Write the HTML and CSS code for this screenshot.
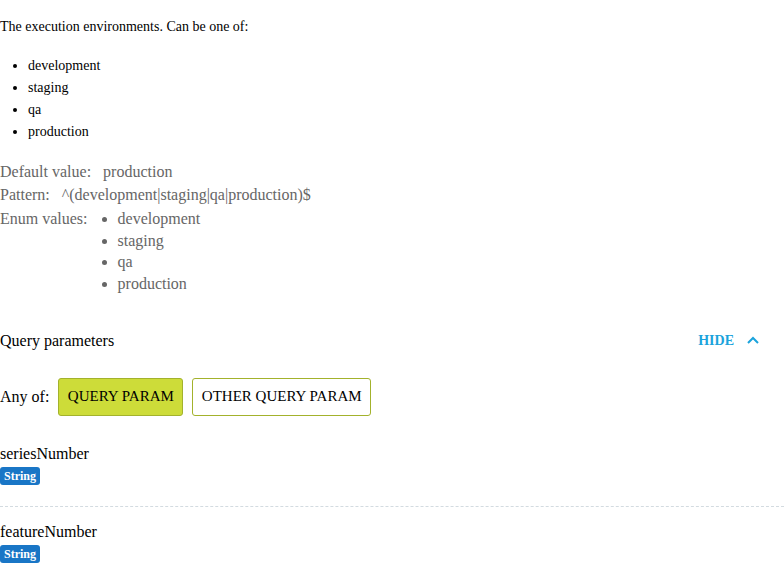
FILE: index.html
```html
<!DOCTYPE html>
<html>
<head>
<meta charset="utf-8">
<link rel="stylesheet" href="styles.css">
</head>
<body>
<div class="page">
  <section class="desc">
    <p class="desc-text">The execution environments. Can be one of:</p>
    <ul class="desc-list">
      <li>development</li>
      <li>staging</li>
      <li>qa</li>
      <li>production</li>
    </ul>
  </section>
  <section class="attrs">
    <div class="attr"><span class="attr-label">Default value:</span><span class="attr-value">production</span></div>
    <div class="attr"><span class="attr-label">Pattern:</span><span class="attr-value">^(development|staging|qa|production)$</span></div>
    <div class="attr enum"><span class="attr-label">Enum values:</span>
      <ul class="enum-list">
        <li>development</li>
        <li>staging</li>
        <li>qa</li>
        <li>production</li>
      </ul>
    </div>
  </section>
  <section class="query">
    <div class="query-head">
      <span class="query-title">Query parameters</span>
      <button class="hide-btn">HIDE <svg class="chev" width="12" height="8" viewBox="0 0 12 8"><path d="M1 7 L6 2 L11 7" fill="none" stroke="#1ba3dc" stroke-width="2"/></svg></button>
    </div>
    <div class="anyof">
      <span class="anyof-label">Any of:</span>
      <button class="opt active">QUERY PARAM</button>
      <button class="opt">OTHER QUERY PARAM</button>
    </div>
    <div class="param">
      <div class="param-name">seriesNumber</div>
      <span class="badge">String</span>
    </div>
    <div class="param last">
      <div class="param-name">featureNumber</div>
      <span class="badge">String</span>
    </div>
  </section>
</div>
</body>
</html>
```
FILE: styles.css
```css
html, body {
  margin: 0;
  padding: 0;
  background: #fff;
}
body {
  font-family: "Liberation Serif", "Times New Roman", serif;
  color: #000;
}
.page {
  padding-top: 19px;
}
.desc-text {
  margin: 0;
  font-size: 14px;
  line-height: 16px;
}
.desc-list {
  margin: 20px 0 0 0;
  padding-left: 28px;
  font-size: 14px;
  line-height: 22px;
}
.attrs {
  margin-top: 17px;
  color: #666;
  font-size: 16px;
}
.attr {
  display: flex;
  line-height: 23px;
}
.attr-label {
  margin-right: 12px;
}
.enum {
  line-height: 22px;
  margin-top: 2px;
}
.enum-list {
  margin: 0;
  padding-left: 18px;
}
.enum-list li {
  line-height: 21.7px;
}
.query {
  margin-top: 33px;
}
.query-head {
  display: flex;
  justify-content: space-between;
  align-items: center;
  height: 26px;
  font-size: 16px;
}
.hide-btn {
  background: none;
  border: none;
  padding: 0 25px 0 0;
  font-family: inherit;
  font-size: 14px;
  font-weight: bold;
  color: #1ba3dc;
  display: flex;
  align-items: center;
  gap: 13px;
  cursor: pointer;
}
.chev {
  display: block;
  margin-top: -1px;
}
.anyof {
  display: flex;
  align-items: center;
  margin-top: 24px;
  font-size: 16px;
}
.anyof-label {
  margin-right: 9px;
}
.opt {
  height: 38px;
  padding: 0 8.5px;
  margin-right: 9px;
  border: 1px solid #a3b22c;
  border-radius: 3px;
  background: #fff;
  font-family: inherit;
  font-size: 15px;
  color: #000;
}
.opt.active {
  background: #cddc39;
}
.param {
  padding-top: 29px;
  padding-bottom: 21px;
  border-bottom: 1px dashed #d3dbe0;
}
.param + .param {
  padding-top: 16px;
}
.param.last {
  border-bottom: none;
}
.param-name {
  font-size: 16px;
  line-height: 18px;
}
.badge {
  display: inline-block;
  margin-top: 4px;
  background: #1976c6;
  color: #fff;
  font-size: 12px;
  font-weight: bold;
  line-height: 18px;
  padding: 0 4px;
  border-radius: 3px;
}
```
